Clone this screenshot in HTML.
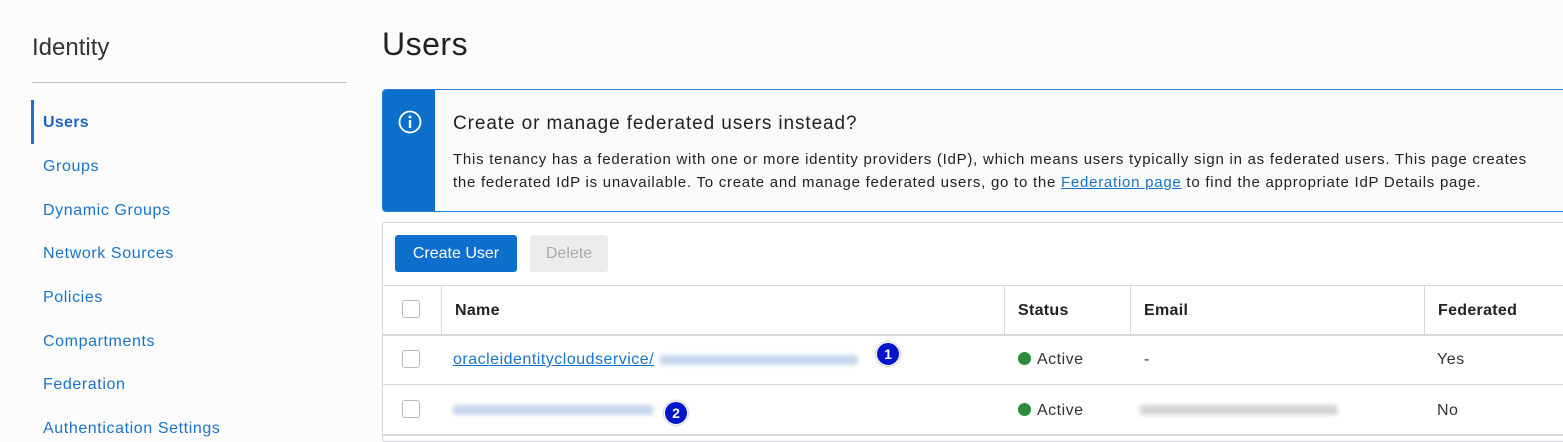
<!DOCTYPE html>
<html><head><meta charset="utf-8"><style>
*{box-sizing:border-box;margin:0;padding:0}
body{width:1563px;height:437px;overflow:hidden;background:#fcfcfc;font-family:"Liberation Sans",Arial,sans-serif;color:#333;position:relative}
.a{position:absolute}
.nav{left:43px;font-size:16px;color:#1a73c8;letter-spacing:0.6px}
.blur{background:#c5d6ee;filter:blur(2px);height:10px;border-radius:3px}
.cb{position:absolute;left:402px;width:18px;height:18px;border:1px solid #b9b9b9;border-radius:3px;background:#fff}
.th{font-weight:bold;font-size:16px;color:#222;letter-spacing:0.3px}
.td{font-size:16px;color:#333;letter-spacing:0.5px}
.dot{display:inline-block;width:13px;height:13px;border-radius:50%;background:#2e8b3c;margin-right:6px;vertical-align:-1px}
.badge{width:24px;height:24px;border-radius:50%;background:#0015c8;color:#fff;font-weight:bold;font-size:14px;text-align:center;line-height:22px;border:1px solid #fff;box-shadow:0 0 2px #888}
</style></head><body>
<div class="a" style="left:32px;top:34px;font-size:24px;color:#333">Identity</div>
<div class="a" style="left:32px;top:82px;width:315px;height:1px;background:#b8bfc8"></div>
<div class="a" style="left:31px;top:100px;width:3px;height:44px;background:#1a73c8"></div>
<div class="a nav" style="top:114px;font-weight:bold;color:#1f63c4;letter-spacing:0.3px">Users</div>
<div class="a nav" style="top:158px">Groups</div>
<div class="a nav" style="top:202px">Dynamic Groups</div>
<div class="a nav" style="top:245px">Network Sources</div>
<div class="a nav" style="top:289px">Policies</div>
<div class="a nav" style="top:333px">Compartments</div>
<div class="a nav" style="top:376px">Federation</div>
<div class="a nav" style="top:420px">Authentication Settings</div>

<div class="a" style="left:382px;top:26px;font-size:32px;color:#222;letter-spacing:0.5px">Users</div>

<div class="a" style="left:382px;top:89px;width:1190px;height:123px;border:1px solid #2a7fd4;border-radius:4px;background:#fafafa;overflow:hidden">
 <div class="a" style="left:-1px;top:-1px;width:53px;height:125px;background:#0b6fcb"></div>
 <svg class="a" style="left:15px;top:20px" width="24" height="24" viewBox="0 0 24 24"><circle cx="12" cy="12" r="10.5" fill="none" stroke="#fff" stroke-width="1.8"/><circle cx="12" cy="7" r="1.5" fill="#fff"/><rect x="10.8" y="10" width="2.4" height="8" fill="#fff"/></svg>
 <div class="a" style="left:70px;top:23px;font-size:19px;color:#222;white-space:nowrap;letter-spacing:0.9px">Create or manage federated users instead?</div>
 <div class="a" style="left:70px;top:58px;font-size:15px;line-height:23px;color:#222;white-space:nowrap;letter-spacing:0.75px">This tenancy has a federation with one or more identity providers (IdP), which means users typically sign in as federated users. This page creates<br>the federated IdP is unavailable. To create and manage federated users, go to the <span style="color:#1a73c8;text-decoration:underline">Federation page</span> to find the appropriate IdP Details page.</div>
</div>

<div class="a" style="left:382px;top:222px;width:1190px;height:220px;border:1px solid #cfd3d8;border-radius:3px;background:#fff"></div>
<div class="a" style="left:395px;top:235px;width:122px;height:37px;background:#0b6fcb;border-radius:3px;color:#fff;font-size:16px;text-align:center;line-height:38px">Create User</div>
<div class="a" style="left:530px;top:235px;width:78px;height:37px;background:#ececec;border-radius:3px;color:#aaa;font-size:16px;text-align:center;line-height:38px">Delete</div>

<div class="a" style="left:382px;top:285px;width:1190px;height:1px;background:#d5d8dc"></div>
<div class="a" style="left:382px;top:334px;width:1190px;height:2px;background:#d5d8dc"></div>
<div class="a" style="left:382px;top:384px;width:1190px;height:1px;background:#d5d8dc"></div>
<div class="a" style="left:382px;top:434px;width:1190px;height:2px;background:#d5d8dc"></div>
<div class="a" style="left:441px;top:285px;width:1px;height:50px;background:#d5d8dc"></div>
<div class="a" style="left:1004px;top:285px;width:1px;height:50px;background:#d5d8dc"></div>
<div class="a" style="left:1130px;top:285px;width:1px;height:50px;background:#d5d8dc"></div>
<div class="a" style="left:1424px;top:285px;width:1px;height:50px;background:#d5d8dc"></div>

<div class="cb" style="top:300px"></div>
<div class="cb" style="top:350px"></div>
<div class="cb" style="top:400px"></div>

<div class="a th" style="left:455px;top:302px">Name</div>
<div class="a th" style="left:1018px;top:302px">Status</div>
<div class="a th" style="left:1144px;top:302px">Email</div>
<div class="a th" style="left:1438px;top:302px">Federated</div>

<div class="a td" style="left:453px;top:351px;color:#1a73c8;text-decoration:underline">oracleidentitycloudservice/</div>
<div class="a blur" style="left:660px;top:355px;width:198px"></div>
<div class="a badge" style="left:876px;top:342px">1</div>
<div class="a td" style="left:1018px;top:351px"><span class="dot"></span>Active</div>
<div class="a td" style="left:1144px;top:351px">-</div>
<div class="a td" style="left:1437px;top:351px">Yes</div>

<div class="a blur" style="left:453px;top:405px;width:200px"></div>
<div class="a badge" style="left:664px;top:401px">2</div>
<div class="a td" style="left:1018px;top:402px"><span class="dot"></span>Active</div>
<div class="a blur" style="left:1140px;top:405px;width:198px;background:#d4d4d4"></div>
<div class="a td" style="left:1437px;top:402px">No</div>
</body></html>
